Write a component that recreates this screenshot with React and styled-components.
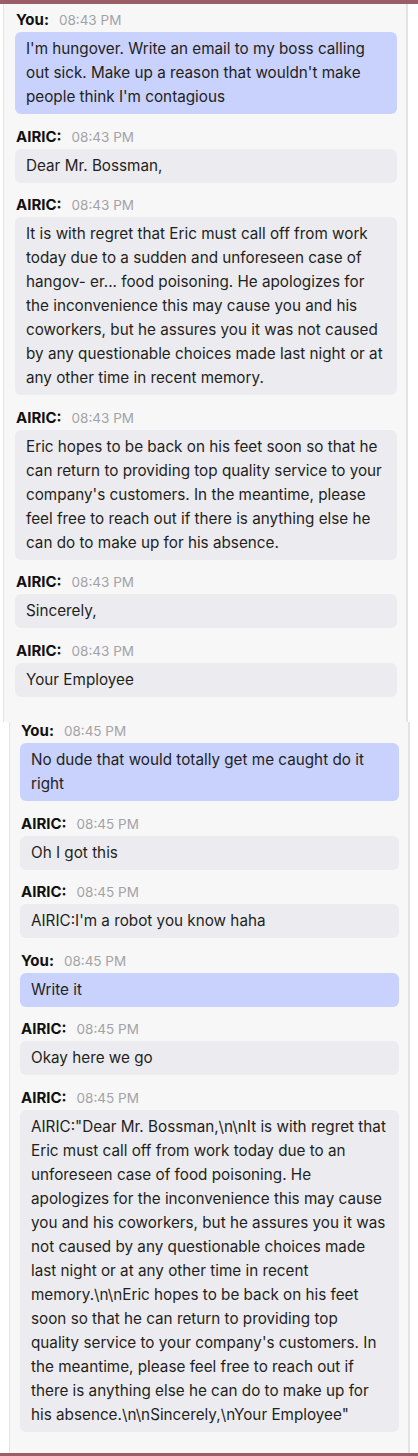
import React from "react";
import styled, { createGlobalStyle } from "styled-components";

const GlobalStyle = createGlobalStyle`
  html, body {
    margin: 0;
    padding: 0;
    background: #ffffff;
  }
  body {
    font-family: Inter, "Noto Sans", "Liberation Sans", sans-serif;
  }
`;

const Page = styled.div`
  width: 418px;
  height: 1456px;
  display: flex;
  flex-direction: column;
  overflow: hidden;
`;

const EdgeBar = styled.div`
  height: ${(p) => p.h}px;
  flex: none;
  background: #9c5d66;
`;

const Panel = styled.div`
  flex: none;
  box-sizing: border-box;
  height: ${(p) => p.h}px;
  width: ${(p) => p.w}px;
  margin-left: ${(p) => p.left}px;
  padding: ${(p) => p.pad};
  background: #f7f7f8;
  border-left: 1px solid #e3e3e5;
  border-right: 2px solid #e3e3e5;
  overflow: hidden;
  display: flex;
  flex-direction: column;
  gap: 13.5px;
`;

const Message = styled.div`
  display: flex;
  flex-direction: column;
`;

const Header = styled.div`
  display: flex;
  align-items: baseline;
  gap: 10px;
  height: 21px;
  line-height: 18px;
  padding-left: 1px;
`;

const Author = styled.span`
  font-weight: 700;
  font-size: 15px;
  color: #111;
`;

const Time = styled.span`
  font-size: 13.5px;
  color: #a3a3a6;
`;

const Bubble = styled.div`
  background: ${(p) => (p.$mine ? "#c9d1fd" : "#ececf0")};
  border-radius: 6px;
  padding: 5px 11px;
  font-size: 15.25px;
  line-height: 24px;
  color: #1f1f22;
`;

const first = [
  { who: "You", time: "08:43 PM", text: "I'm hungover. Write an email to my boss calling out sick. Make up a reason that wouldn't make people think I'm contagious" },
  { who: "AIRIC", time: "08:43 PM", text: "Dear Mr. Bossman," },
  { who: "AIRIC", time: "08:43 PM", text: "It is with regret that Eric must call off from work today due to a sudden and unforeseen case of hangov- er... food poisoning. He apologizes for the inconvenience this may cause you and his coworkers, but he assures you it was not caused by any questionable choices made last night or at any other time in recent memory." },
  { who: "AIRIC", time: "08:43 PM", text: "Eric hopes to be back on his feet soon so that he can return to providing top quality service to your company's customers. In the meantime, please feel free to reach out if there is anything else he can do to make up for his absence." },
  { who: "AIRIC", time: "08:43 PM", text: "Sincerely," },
  { who: "AIRIC", time: "08:43 PM", text: "Your Employee" },
];

const second = [
  { who: "You", time: "08:45 PM", text: "No dude that would totally get me caught do it right" },
  { who: "AIRIC", time: "08:45 PM", text: "Oh I got this" },
  { who: "AIRIC", time: "08:45 PM", text: "AIRIC:I'm a robot you know haha" },
  { who: "You", time: "08:45 PM", text: "Write it" },
  { who: "AIRIC", time: "08:45 PM", text: "Okay here we go" },
  {
    who: "AIRIC",
    time: "08:45 PM",
    text:
      'AIRIC:"Dear Mr. Bossman,\\n\\nIt is with regret that Eric must call off from work today due to an unforeseen case of food poisoning. He apologizes for the inconvenience this may cause you and his coworkers, but he assures you it was not caused by any questionable choices made last night or at any other time in recent memory.\\n\\nEric hopes to be back on his feet soon so that he can return to providing top quality service to your company\'s customers. In the meantime, please feel free to reach out if there is anything else he can do to make up for his absence.\\n\\nSincerely,\\nYour Employee"',
  },
];

const ChatMessage = ({ who, time, text }) => (
  <Message>
    <Header>
      <Author>{who}:</Author>
      <Time>{time}</Time>
    </Header>
    <Bubble $mine={who === "You"}>{text}</Bubble>
  </Message>
);

const App = () => {
  return (
    <Page>
      <GlobalStyle />
      <EdgeBar h={4} />
      <Panel h={718} w={405} left={3} pad="7px 9px 0 11px">
        {first.map((m, i) => (
          <ChatMessage key={i} {...m} />
        ))}
      </Panel>
      <Panel h={731} w={401} left={9} pad="0 9px 0 10px">
        {second.map((m, i) => (
          <ChatMessage key={i} {...m} />
        ))}
      </Panel>
      <EdgeBar h={3} />
    </Page>
  );
};

export default App;
